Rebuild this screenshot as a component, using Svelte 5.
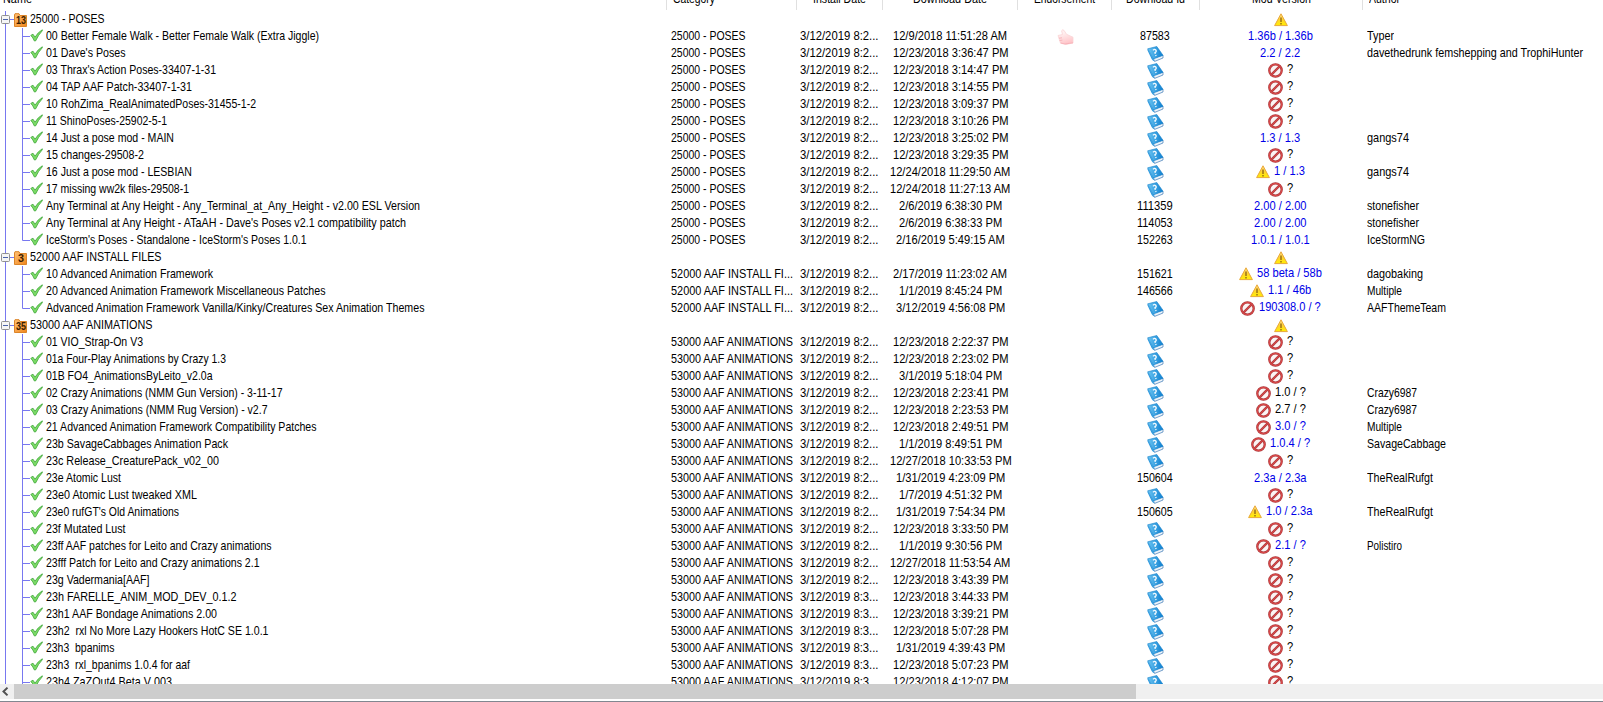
<script>
  const columns = [
    { title: 'Name', width: 29, cls: 'name' },
    { title: 'Category', width: 42, cls: 'category' },
    { title: 'Install Date', width: 53, cls: 'center' },
    { title: 'Download Date', width: 74, cls: 'center' },
    { title: 'Endorsement', width: 61, cls: 'center' },
    { title: 'Download Id', width: 59, cls: 'center' },
    { title: 'Mod Version', width: 59, cls: 'center' },
    { title: 'Author', width: 31, cls: 'author' },
  ];

  // mod: [name, name width, install, download date, id, version icon, version, author, author width]
  const groups = [
    {
      title: '25000 - POSES', width: 74.5, count: 13, category: '25000 - POSES', catWidth: 74.5,
      mods: [
        ['00 Better Female Walk - Better Female Walk (Extra Jiggle)', 273, '2', '12/9/2018 11:51:28 AM', '87583', '', '1.36b / 1.36b', 'Typer', 27],
        ["01 Dave's Poses", 79.5, '2', '12/23/2018 3:36:47 PM', '', '', '2.2 / 2.2', 'davethedrunk femshepping and TrophiHunter', 216],
        ["03 Thrax's Action Poses-33407-1-31", 170, '2', '12/23/2018 3:14:47 PM', '', 'no', '?'],
        ['04 TAP AAF Patch-33407-1-31', 146, '2', '12/23/2018 3:14:55 PM', '', 'no', '?'],
        ['10 RohZima_RealAnimatedPoses-31455-1-2', 210, '2', '12/23/2018 3:09:37 PM', '', 'no', '?'],
        ['11 ShinoPoses-25902-5-1', 121, '2', '12/23/2018 3:10:26 PM', '', 'no', '?'],
        ['14 Just a pose mod - MAIN', 128, '2', '12/23/2018 3:25:02 PM', '', '', '1.3 / 1.3', 'gangs74', 42],
        ['15 changes-29508-2', 98, '2', '12/23/2018 3:29:35 PM', '', 'no', '?'],
        ['16 Just a pose mod - LESBIAN', 146, '2', '12/24/2018 11:29:50 AM', '', 'warn', '1 / 1.3', 'gangs74', 42],
        ['17 missing ww2k files-29508-1', 143, '2', '12/24/2018 11:27:13 AM', '', 'no', '?'],
        ['Any Terminal at Any Height - Any_Terminal_at_Any_Height - v2.00 ESL Version', 374, '2', '2/6/2019 6:38:30 PM', '111359', '', '2.00 / 2.00', 'stonefisher', 52],
        ["Any Terminal at Any Height - ATaAH - Dave's Poses v2.1 compatibility patch", 360, '2', '2/6/2019 6:38:33 PM', '114053', '', '2.00 / 2.00', 'stonefisher', 52],
        ["IceStorm's Poses - Standalone - IceStorm's Poses 1.0.1", 260.5, '2', '2/16/2019 5:49:15 AM', '152263', '', '1.0.1 / 1.0.1', 'IceStormNG', 58],
      ],
    },
    {
      title: '52000 AAF INSTALL FILES', width: 131.5, count: 3, category: '52000 AAF INSTALL FI...', catWidth: 122,
      mods: [
        ['10 Advanced Animation Framework', 167, '2', '2/17/2019 11:23:02 AM', '151621', 'warn', '58 beta / 58b', 'dagobaking', 56],
        ['20 Advanced Animation Framework Miscellaneous Patches', 279.5, '2', '1/1/2019 8:45:24 PM', '146566', 'warn', '1.1 / 46b', 'Multiple', 35],
        ['Advanced Animation Framework Vanilla/Kinky/Creatures Sex Animation Themes', 378.5, '2', '3/12/2019 4:56:08 PM', '', 'no', '190308.0 / ?', 'AAFThemeTeam', 79],
      ],
    },
    {
      title: '53000 AAF ANIMATIONS', width: 122.5, count: 35, category: '53000 AAF ANIMATIONS', catWidth: 122,
      mods: [
        ['01 VIO_Strap-On V3', 97, '2', '12/23/2018 2:22:37 PM', '', 'no', '?'],
        ['01a Four-Play Animations by Crazy 1.3', 180, '2', '12/23/2018 2:23:02 PM', '', 'no', '?'],
        ['01B FO4_AnimationsByLeito_v2.0a', 166.5, '2', '3/1/2019 5:18:04 PM', '', 'no', '?'],
        ['02 Crazy Animations (NMM Gun Version) - 3-11-17', 236.5, '2', '12/23/2018 2:23:41 PM', '', 'no', '1.0 / ?', 'Crazy6987', 50, 'dark'],
        ['03 Crazy Animations (NMM Rug Version) - v2.7', 221.5, '2', '12/23/2018 2:23:53 PM', '', 'no', '2.7 / ?', 'Crazy6987', 50, 'dark'],
        ['21 Advanced Animation Framework Compatibility Patches', 270.5, '2', '12/23/2018 2:49:51 PM', '', 'no', '3.0 / ?', 'Multiple', 35],
        ['23b SavageCabbages Animation Pack', 182, '2', '1/1/2019 8:49:51 PM', '', 'no', '1.0.4 / ?', 'SavageCabbage', 79],
        ['23c Release_CreaturePack_v02_00', 173, '2', '12/27/2018 10:33:53 PM', '', 'no', '?'],
        ['23e Atomic Lust', 75, '2', '1/31/2019 4:23:09 PM', '150604', '', '2.3a / 2.3a', 'TheRealRufgt', 66],
        ['23e0 Atomic Lust tweaked XML', 151, '2', '1/7/2019 4:51:32 PM', '', 'no', '?'],
        ["23e0 rufGT's Old Animations", 133, '2', '1/31/2019 7:54:34 PM', '150605', 'warn', '1.0 / 2.3a', 'TheRealRufgt', 66],
        ['23f Mutated Lust', 79.5, '2', '12/23/2018 3:33:50 PM', '', 'no', '?'],
        ['23ff AAF patches for Leito and Crazy animations', 225.5, '2', '1/1/2019 9:30:56 PM', '', 'no', '2.1 / ?', 'Polistiro', 35],
        ['23fff Patch for Leito and Crazy animations 2.1', 213.5, '2', '12/27/2018 11:53:54 AM', '', 'no', '?'],
        ['23g Vadermania[AAF]', 103.5, '2', '12/23/2018 3:43:39 PM', '', 'no', '?'],
        ['23h FARELLE_ANIM_MOD_DEV_0.1.2', 190.5, '3', '12/23/2018 3:44:33 PM', '', 'no', '?'],
        ['23h1 AAF Bondage Animations 2.00', 171, '3', '12/23/2018 3:39:21 PM', '', 'no', '?'],
        ['23h2  rxl No More Lazy Hookers HotC SE 1.0.1', 222.5, '3', '12/23/2018 5:07:28 PM', '', 'no', '?'],
        ['23h3  bpanims', 68.5, '3', '1/31/2019 4:39:43 PM', '', 'no', '?'],
        ['23h3  rxl_bpanims 1.0.4 for aaf', 144, '3', '12/23/2018 5:07:23 PM', '', 'no', '?'],
        ['23h4 ZaZOut4 Beta V 003', 126, '3', '12/23/2018 4:12:07 PM', '', 'no', '?'],
      ],
    },
  ];

  // squeeze the text to the given width; without one, use the average condensing ratio
  function fit(node, width) {
    const inner = node.firstElementChild;
    const natural = inner.getBoundingClientRect().width;
    const target = width || natural * 0.897;
    node.style.width = target + 'px';
    inner.style.transform = `scaleX(${target / natural})`;
  }
</script>

{#snippet label(text, width)}
  <span class="fit" use:fit={width}><span>{text}</span></span>
{/snippet}

{#snippet warning()}
  <svg class="warn" width="14" height="14" viewBox="0 0 14 14">
    <path d="M7 .8 13.4 12.6H.6Z" fill="url(#sun)" stroke="#e8a83a" stroke-width="1" stroke-linejoin="round" />
    <path d="M7 4.6V9" stroke="#8a6114" stroke-width="1.3" />
    <path d="M7 10.1v1.4" stroke="#8a6114" stroke-width="1.3" />
  </svg>
{/snippet}

<svg class="defs" width="0" height="0">
  <defs>
    <linearGradient id="sun" x1="0" y1="0" x2="0" y2="1">
      <stop offset="0" stop-color="#ffd98a" />
      <stop offset=".5" stop-color="#ffd42e" />
      <stop offset="1" stop-color="#ffee00" />
    </linearGradient>
    <linearGradient id="folder" x1="0" y1="0" x2="1" y2="1">
      <stop offset="0" stop-color="#ffc277" />
      <stop offset="1" stop-color="#f0861c" />
    </linearGradient>
    <linearGradient id="cover" x1="0" y1="0" x2="1" y2="0">
      <stop offset="0" stop-color="#6cc6f3" />
      <stop offset="1" stop-color="#0d7fd0" />
    </linearGradient>
    <linearGradient id="skin" x1="0" y1="0" x2=".3" y2="1">
      <stop offset=".3" stop-color="#fff0f0" />
      <stop offset="1" stop-color="#ffc6ca" />
    </linearGradient>
  </defs>
</svg>

<div class="window">
  <div class="row head">
    {#each columns as col}
      <div class="th {col.cls}">{@render label(col.title, col.width)}</div>
    {/each}
  </div>

  <div class="list">
    {#each groups as group, g}
      <div class="row">
        <div class="cell tree">
          <span class="trunk">
            <svg width="14" height="17" viewBox="0 0 14 17">
              <path d="M9 8.5h5" stroke="#7878f0" />
              <rect x="1.5" y="4.5" width="8" height="8" rx="1" fill="#f6f6f6" stroke="#919191" />
              <path d="M3 8.5h5" stroke="#4b63a7" />
            </svg>
          </span>
          <svg class="folder" width="13" height="14" viewBox="0 0 13 14">
            <path d="M.5 2V13.5h12V2.5H6L5 .7H1Z" fill="url(#folder)" stroke="#dc8428" />
            <text x="7" y="11.4" text-anchor="middle" textLength={group.count > 9 ? 10 : 6} lengthAdjust="spacingAndGlyphs">{group.count}</text>
          </svg>
          {@render label(group.title, group.width)}
        </div>
        <div class="cell"></div>
        <div class="cell"></div>
        <div class="cell"></div>
        <div class="cell"></div>
        <div class="cell"></div>
        <div class="cell center version">{@render warning()}</div>
      </div>

      {#each group.mods as [name, width, minute, downloaded, id, icon, version, author, authorWidth, tone], i}
        <div class="row">
          <div class="cell tree">
            <span class="trunk"></span>
            <svg class="branch" width="8" height="17" viewBox="0 0 8 17">
              <path d={i === group.mods.length - 1 && g < 2 ? 'M.5 0V8.5H9' : 'M.5 0V17M.5 8.5H9'} />
            </svg>
            <svg class="check" width="13" height="13" viewBox="0 0 13 13">
              <path d="M.8 6.4 3 5.2 5 8.2Q8 3.2 12.3.8L12.4 1.6Q8.3 6 5.6 11.9L4.4 12Q3 8.6.8 6.4Z" />
            </svg>
            {@render label(name, width)}
          </div>
          <div class="cell category">{@render label(group.category, group.catWidth)}</div>
          <div class="cell install">{@render label(`3/12/2019 8:${minute}...`, 78.5)}</div>
          <div class="cell center">{@render label(downloaded)}</div>
          <div class="cell center">
            {#if g === 0 && i === 0}
              <svg class="thumb" width="17" height="16" viewBox="0 0 17 16">
                <path d="M1 6.5 5.5 5.5 4.6 1.8Q5.6-.2 7.2 1.6L9.5 5.3 16 8.2V14L9 15.4 3.5 14.2Z" fill="url(#skin)" stroke="#fad4d6" stroke-width=".8" />
                <path d="M2 9.2 5 8.8M2.6 11.5 5.4 11.1M3.7 14 8 15l8-1.2" fill="none" stroke="#f6abb2" stroke-width=".8" />
              </svg>
            {/if}
          </div>
          <div class="cell center id">
            {#if id}
              {@render label(id, id.length * 5.95)}
            {:else}
              <svg class="book" width="17" height="16" viewBox="0 0 17 16">
                <path d="M6.2 12 16 9.2V12L7.6 15.4Z" fill="#eef4fa" stroke="#3d78b4" stroke-width=".7" />
                <path d="M.7 2.8 9.8.5 16 9.3 6.3 13Z" fill="url(#cover)" stroke="#1581cb" stroke-width=".6" />
                <path d="M.7 2.8 6.3 13 7.6 15.4Q5.6 15 4.6 13L.6 4.5Z" fill="#2e9ade" />
                <path d="M6 4.4Q7.2 2.7 8.7 3.9 10 5.5 8 6.6L8.3 7.9M8.7 9.1l.4 1" fill="none" stroke="#f2faff" stroke-width="1.4" />
              </svg>
            {/if}
          </div>
          <div class="cell center version" class:raised={icon} class:dark={version === '?' || tone}>
            {#if icon === 'warn'}
              {@render warning()}
            {:else if icon}
              <svg class="no" width="15" height="15" viewBox="0 0 15 15">
                <circle cx="7.5" cy="7.5" r="6.2" fill="#fbf4f4" stroke="#a93b3e" stroke-width="2.3" />
                <path d="M3.4 11.6 11.6 3.4" stroke="#a93b3e" stroke-width="2.2" />
                <circle cx="7.5" cy="7.5" r="6.2" fill="none" stroke="#da4848" stroke-width="1.2" />
                <path d="M3.6 11.4 11.4 3.6" stroke="#da4848" stroke-width="1.1" />
              </svg>
            {/if}
            {@render label(version)}
          </div>
          <div class="cell author">
            {#if author}{@render label(author, authorWidth)}{/if}
          </div>
        </div>
      {/each}
    {/each}
  </div>

  <div class="scrollbar">
    <span class="arrow">
      <svg width="14" height="15" viewBox="0 0 14 15">
        <path d="M7.5 3.6 3.5 7.5 7.5 11.4" fill="none" stroke="#505050" stroke-width="2" />
      </svg>
    </span>
    <span class="handle"></span>
  </div>
</div>

<style>
  :global(body) {
    background: #fff;
  }
  .defs {
    position: absolute;
  }
  .window {
    display: flex;
    flex-direction: column;
    height: 702px;
    overflow: hidden;
    box-sizing: border-box;
    border-bottom: 1px solid #828790;
    font: 12.4px/17px "Liberation Sans", Arial, sans-serif;
    color: #000;
  }
  .row {
    display: grid;
    grid-template-columns: 667px 130px 86px 135px 94px 88px 163px 1fr;
    height: 17px;
  }
  .head {
    flex: none;
    height: 10px;
  }
  .th {
    display: flex;
    height: 10px;
    align-items: flex-end;
    box-sizing: border-box;
    border-right: 1px solid #e0e0e0;
    padding-bottom: 2px;
  }
  .th:last-child {
    border-right: 0;
  }
  .th.name {
    padding-left: 3px;
  }
  .th.category,
  .th.author {
    padding-left: 6px;
  }
  .center {
    justify-content: center;
  }
  .list {
    flex: 1;
    min-height: 0;
    overflow: hidden;
    padding-top: 1px;
  }
  .cell {
    display: flex;
    align-items: center;
    min-width: 0;
  }
  .cell.category {
    padding-left: 4px;
  }
  .cell.install {
    padding-left: 3px;
  }
  .cell.author {
    padding-left: 4px;
  }
  .cell.id,
  .cell.version {
    padding-right: 2px;
  }
  .fit {
    display: block;
    flex: none;
    height: 17px;
    white-space: pre;
  }
  .fit > span {
    display: inline-block;
    transform-origin: 0 50%;
  }
  .trunk {
    width: 14px;
    height: 17px;
    background: linear-gradient(#7878f0, #7878f0) 5px 0 / 1px 100% no-repeat;
  }
  .trunk svg {
    display: block;
  }
  .folder {
    margin-right: 3px;
  }
  .folder text {
    font: bold 10px "Liberation Sans", Arial, sans-serif;
    fill: #3a1c00;
  }
  .branch {
    margin-left: 8px;
  }
  .branch path {
    fill: none;
    stroke: #7878f0;
  }
  .check {
    margin-right: 3px;
    margin-top: -2px;
  }
  .check path {
    fill: #7ddc67;
    stroke: #3fa63a;
    stroke-width: 0.8;
  }
  .version {
    gap: 4px;
    color: #0000e8;
  }
  .raised {
    padding-bottom: 1px;
  }
  .raised .fit {
    margin-top: -1px;
  }
  .dark {
    color: #000;
  }
  .scrollbar {
    flex: none;
    display: flex;
    height: 15px;
    margin-bottom: 2px;
    background: #f0f0f0;
  }
  .arrow {
    width: 14px;
  }
  .handle {
    width: 1122px;
    background: #cdcdcd;
  }
</style>
